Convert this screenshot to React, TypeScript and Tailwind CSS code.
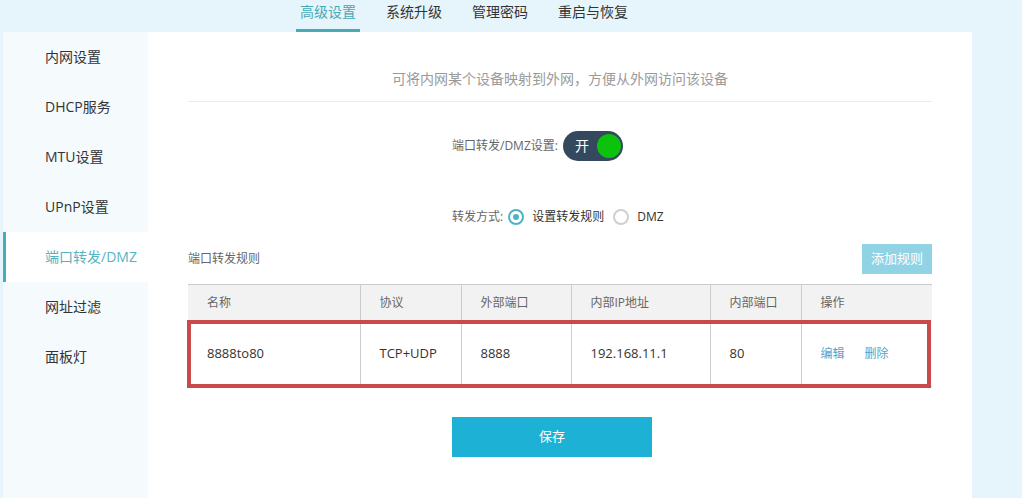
import { useState } from "react";

const FONT = "font-['Open_Sans','Noto_Sans_CJK_SC',sans-serif]";

const TABS = ["高级设置", "系统升级", "管理密码", "重启与恢复"];

const MENU = [
  "内网设置",
  "DHCP服务",
  "MTU设置",
  "UPnP设置",
  "端口转发/DMZ",
  "网址过滤",
  "面板灯",
];

const COLUMNS = [
  { label: "名称", width: "w-[172px]" },
  { label: "协议", width: "w-[101px]" },
  { label: "外部端口", width: "w-[110px]" },
  { label: "内部IP地址", width: "w-[139px]" },
  { label: "内部端口", width: "w-[91px]" },
  { label: "操作", width: "w-[131px]" },
];

const RULES = [
  { name: "8888to80", proto: "TCP+UDP", extPort: "8888", ip: "192.168.11.1", intPort: "80" },
];

function Radio({ checked, label }: { checked: boolean; label: string }) {
  return (
    <span className="flex items-center gap-[8px]">
      <span
        className={[
          "flex h-[16px] w-[16px] items-center justify-center rounded-full border-2",
          checked ? "border-[#4db3c4]" : "border-[#cfcfcf]",
        ].join(" ")}
      >
        {checked && <span className="h-[6px] w-[6px] rounded-full bg-[#4db3c4]" />}
      </span>
      <span className="text-[12px] text-[#333]">{label}</span>
    </span>
  );
}

export default function App() {
  const [enabled] = useState(true);
  const active = 4;

  return (
    <div className={`flex h-[498px] w-[1022px] flex-col overflow-hidden bg-[#e6f5fb] ${FONT}`}>
      {/* top tabs */}
      <div className="flex h-[32px] shrink-0 gap-[22px] pl-[296px]">
        {TABS.map((tab, i) => (
          <div
            key={tab}
            className={[
              "flex h-full items-start border-b-[3px] px-[4px] pt-[2px] text-[14px] leading-[20px]",
              i === 0 ? "border-b-[#4aabb8] text-[#45aab7]" : "border-b-transparent text-[#333]",
            ].join(" ")}
          >
            {tab}
          </div>
        ))}
      </div>

      <div className="flex flex-1">
        {/* sidebar */}
        <div className="ml-[3px] w-[145px] bg-[#f5fbfd]">
          {MENU.map((item, i) => (
            <div
              key={item}
              className={[
                "flex h-[50px] items-center text-[14px] leading-[20px]",
                i === active
                  ? "border-l-[3px] border-l-[#4aabb8] bg-white pl-[39px] text-[#56b3c2]"
                  : "pl-[42px] text-[#333]",
              ].join(" ")}
            >
              {item}
            </div>
          ))}
        </div>

        {/* main panel */}
        <div className="flex w-[824px] flex-col bg-white px-[40px] pt-[37px]">
          <div className="h-[20px] text-center text-[14px] leading-[20px] text-[#9a9a9a]">
            可将内网某个设备映射到外网，方便从外网访问该设备
          </div>
          <div className="mt-[12px] h-px bg-[#ebebeb]" />

          <div className="mt-[29px] flex h-[30px] items-center pl-[264px]">
            <span className="text-[12px] text-[#666]">端口转发/DMZ设置:</span>
            <div className="ml-[5px] flex h-[30px] w-[60px] items-center justify-between rounded-full bg-[#34495e] pl-[12px] pr-[2px]">
              <span className="text-[14px] leading-[20px] text-white">{enabled ? "开" : "关"}</span>
              <span className="h-[24px] w-[24px] rounded-full bg-[#0cc20c]" />
            </div>
          </div>

          <div className="mt-[46px] flex h-[20px] items-center gap-[9px] pl-[264px]">
            <span className="mr-[-4px] text-[12px] text-[#666]">转发方式:</span>
            <Radio checked label="设置转发规则" />
            <Radio checked={false} label="DMZ" />
          </div>

          <div className="mt-[17px] flex h-[30px] items-center justify-between">
            <span className="text-[12px] text-[#666]">端口转发规则</span>
            <button className="h-[30px] w-[70px] bg-[#8fd3e5] text-[13px] text-white">添加规则</button>
          </div>

          <div className="relative mt-[10px]">
            <table className="w-[744px] table-fixed border-collapse text-left text-[13px]">
              <thead>
                <tr className="h-[37px] border-t border-[#cccccc] bg-[#f2f2f2] text-[12px] text-[#666]">
                  {COLUMNS.map((col, i) => (
                    <th
                      key={col.label}
                      className={[
                        col.width,
                        "pl-[19px] font-normal",
                        i > 0 ? "border-l border-[#cccccc]" : "",
                      ].join(" ")}
                    >
                      {col.label}
                    </th>
                  ))}
                </tr>
              </thead>
              <tbody>
                {RULES.map((r) => (
                  <tr key={r.name} className="h-[65px] border-b border-[#cccccc] text-[#333]">
                    <td className="pl-[19px]">{r.name}</td>
                    <td className="border-l border-[#cccccc] pl-[19px]">{r.proto}</td>
                    <td className="border-l border-[#cccccc] pl-[19px]">{r.extPort}</td>
                    <td className="border-l border-[#cccccc] pl-[19px]">{r.ip}</td>
                    <td className="border-l border-[#cccccc] pl-[19px]">{r.intPort}</td>
                    <td className="border-l border-[#cccccc] pl-[19px] text-[12px]">
                      <span className="text-[#5a9fc9]">编辑</span>
                      <span className="ml-[20px] text-[#5a9fc9]">删除</span>
                    </td>
                  </tr>
                ))}
              </tbody>
            </table>
            {/* annotation box drawn over the rule row */}
            <div className="pointer-events-none absolute left-[-1px] top-[36px] h-[68px] w-[744px] border-4 border-[#c94a4c]" />
          </div>

          <button className="ml-[264px] mt-[30px] h-[40px] w-[200px] bg-[#1db1d5] text-[13px] text-white">
            保存
          </button>
        </div>
      </div>
    </div>
  );
}
